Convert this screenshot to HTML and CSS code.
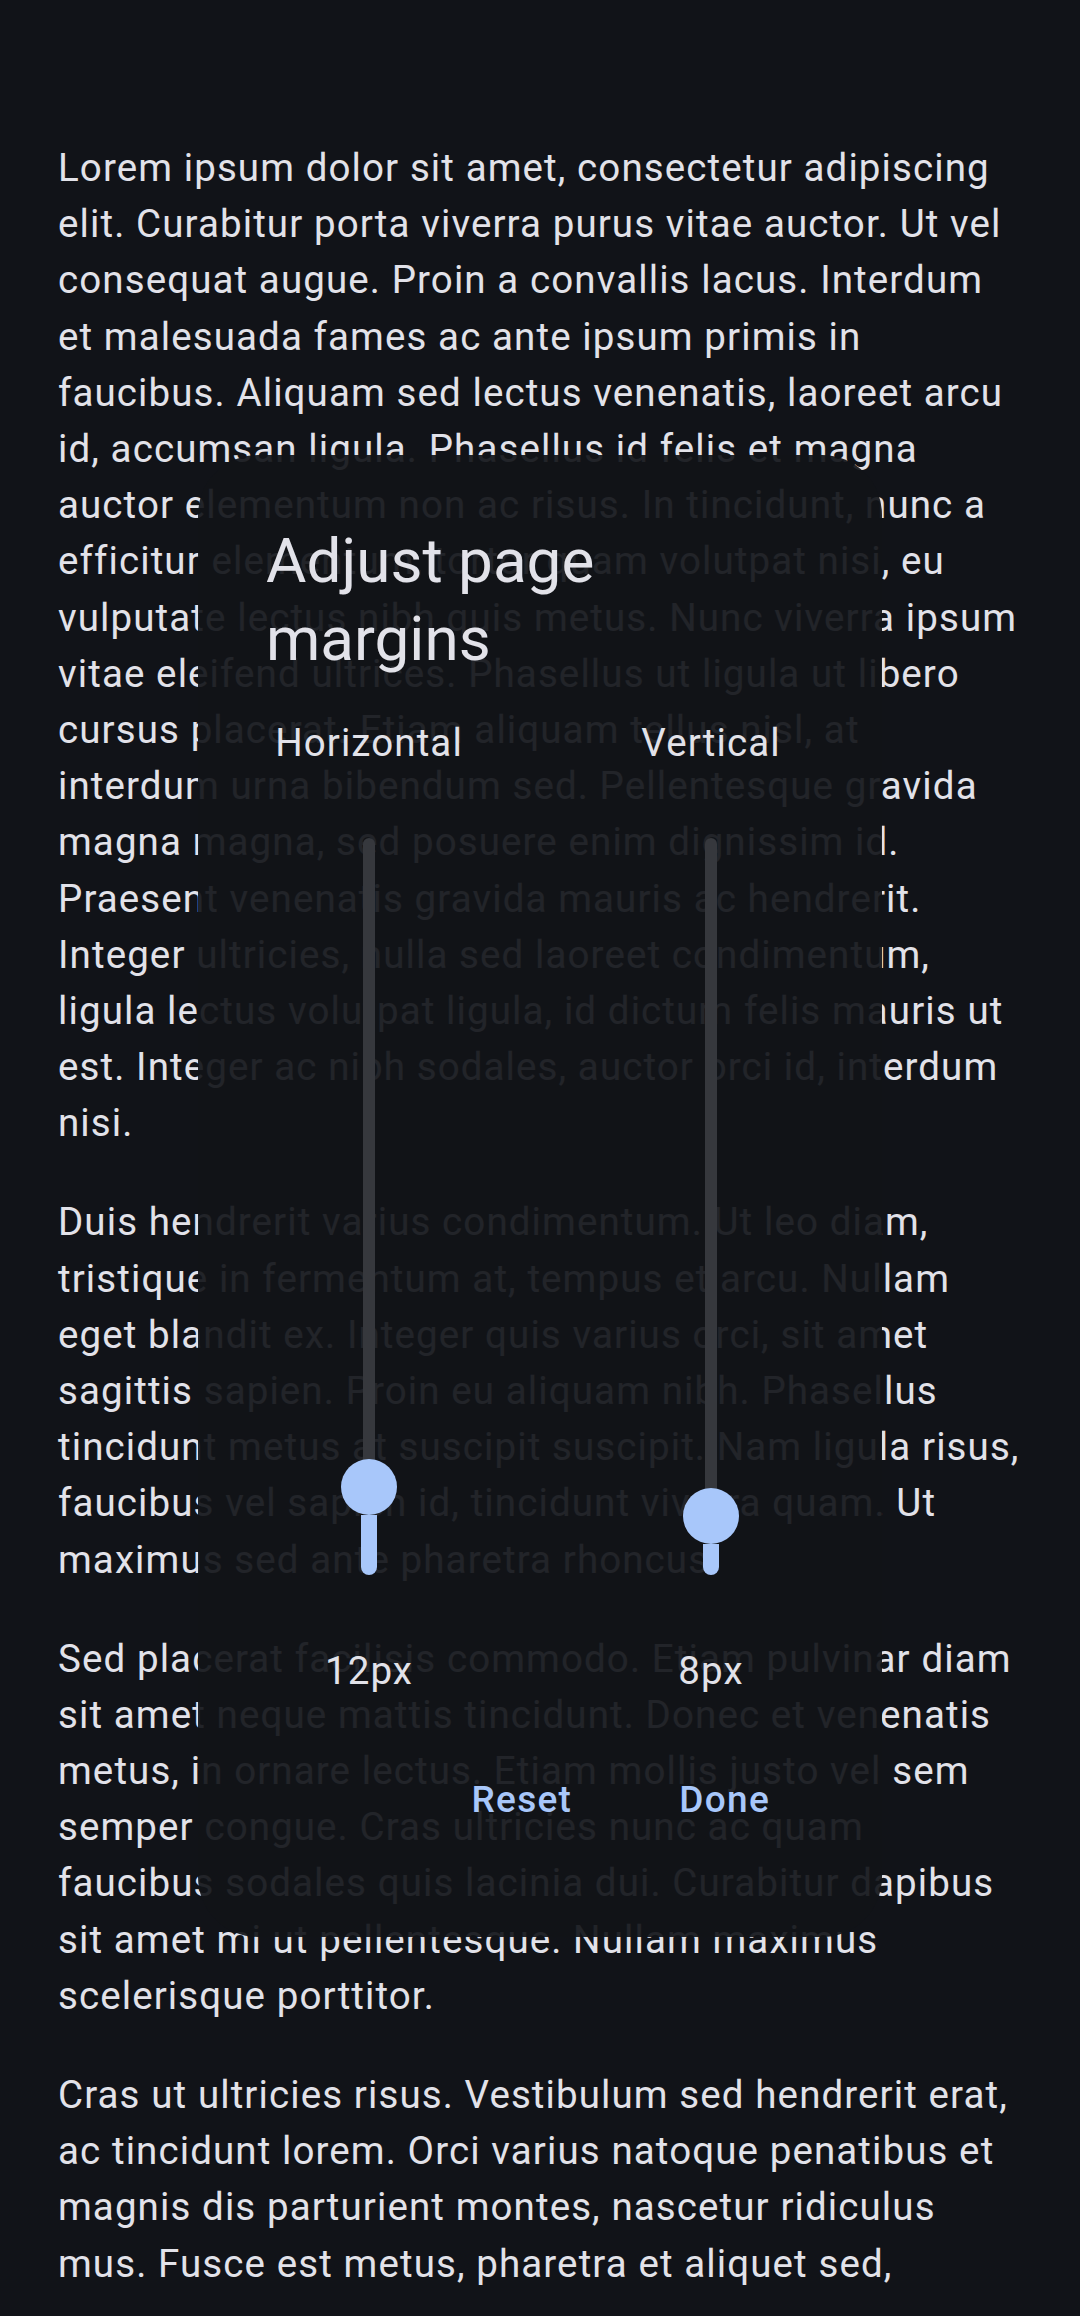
FILE: index.html
```html
<!DOCTYPE html>
<html lang="en">
<head>
<meta charset="utf-8">
<title>Adjust page margins</title>
<link rel="stylesheet" href="styles.css">
</head>
<body>
<main class="reader">
  <p>Lorem ipsum dolor sit amet, consectetur adipiscing elit. Curabitur porta viverra purus vitae auctor. Ut vel consequat augue. Proin a convallis lacus. Interdum et malesuada fames ac ante ipsum primis in faucibus. Aliquam sed lectus venenatis, laoreet arcu id, accumsan ligula. Phasellus id felis et magna auctor elementum non ac risus. In tincidunt, nunc a efficitur elementum, tortor quam volutpat nisi, eu vulputate lectus nibh quis metus. Nunc viverra ipsum vitae eleifend ultrices. Phasellus ut ligula ut libero cursus placerat. Etiam aliquam tellus nisl, at interdum urna bibendum sed. Pellentesque gravida magna magna, sed posuere enim dignissim id. Praesent venenatis gravida mauris ac hendrerit. Integer ultricies, nulla sed laoreet condimentum, ligula lectus volutpat ligula, id dictum felis mauris ut est. Integer ac nibh sodales, auctor orci id, interdum nisi.</p>
  <p>Duis hendrerit varius condimentum. Ut leo diam, tristique in fermentum at, tempus et arcu. Nullam eget blandit ex. Integer quis varius orci, sit amet sagittis sapien. Proin eu aliquam nibh. Phasellus tincidunt metus at suscipit suscipit. Nam ligula risus, faucibus vel sapien id, tincidunt viverra quam. Ut maximus sed ante pharetra rhoncus.</p>
  <p>Sed placerat facilisis commodo. Etiam pulvinar diam sit amet neque mattis tincidunt. Donec et venenatis metus, in ornare lectus. Etiam mollis justo vel sem semper congue. Cras ultricies nunc ac quam faucibus sodales quis lacinia dui. Curabitur dapibus sit amet mi ut pellentesque. Nullam maximus scelerisque porttitor.</p>
  <p>Cras ut ultricies risus. Vestibulum sed hendrerit erat, ac tincidunt lorem. Orci varius natoque penatibus et magnis dis parturient montes, nascetur ridiculus mus. Fusce est metus, pharetra et aliquet sed, fermentum sit amet lectus. Vivamus a tortor non nisl hendrerit tempus.</p>
</main>

<section class="dialog" role="dialog" aria-labelledby="dlg-title">
  <h2 class="dialog-title" id="dlg-title">Adjust page margins</h2>
  <div class="sliders">
    <div class="slider-col">
      <div class="slider-label">Horizontal</div>
      <div class="slider">
        <div class="track-inactive"></div>
        <div class="thumb"></div>
        <div class="track-active" style="height:60px"></div>
      </div>
      <div class="slider-value">12px</div>
    </div>
    <div class="slider-col">
      <div class="slider-label">Vertical</div>
      <div class="slider">
        <div class="track-inactive"></div>
        <div class="thumb"></div>
        <div class="track-active" style="height:31px"></div>
      </div>
      <div class="slider-value">8px</div>
    </div>
  </div>
  <div class="actions">
    <button class="text-btn" type="button">Reset</button>
    <button class="text-btn" type="button">Done</button>
  </div>
</section>
</body>
</html>
```

FILE: styles.css
```css
html, body {
  margin: 0;
  padding: 0;
  background: #111318;
}

body {
  font-family: Roboto, "Noto Sans", "Liberation Sans", sans-serif;
  color: #e2e2e9;
}

.reader {
  box-sizing: border-box;
  height: 2296px;
  overflow: hidden;
  padding: 140px 58px 0;
  font-size: 38.5px;
  line-height: 56.2px;
  letter-spacing: 1.1px;
}

.reader p {
  margin: 0 0 42.8px;
}

.dialog {
  position: absolute;
  top: 455px;
  left: 198px;
  width: 684px;
  box-sizing: border-box;
  padding: 67px 0 93px;
  border-radius: 60px;
  background: rgba(17, 19, 24, 0.92);
  display: flex;
  flex-direction: column;
}

.dialog-title {
  margin: 0;
  padding: 0 68px;
  font-size: 62px;
  line-height: 78px;
  font-weight: 400;
  color: #e2e2e9;
}

.sliders {
  margin-top: 44px;
  display: grid;
  grid-template-columns: 1fr 1fr;
}

.slider-col {
  display: flex;
  flex-direction: column;
  align-items: center;
}

.slider-label,
.slider-value {
  font-size: 38.5px;
  line-height: 42px;
  letter-spacing: 1.1px;
  color: #e2e2e9;
}

.slider {
  margin-top: 74px;
  height: 737px;
  width: 56px;
  display: flex;
  flex-direction: column;
  align-items: center;
}

.track-inactive {
  flex: 1;
  width: 12px;
  background: #36383d;
  border-radius: 6px 6px 0 0;
}

.thumb {
  flex: none;
  width: 56px;
  height: 56px;
  border-radius: 50%;
  background: #a8c7fa;
}

.track-active {
  flex: none;
  width: 16px;
  background: #a8c7fa;
  border-radius: 0 0 8px 8px;
}

.slider-value {
  margin-top: 75px;
}

.actions {
  margin-top: 64px;
  display: flex;
  justify-content: flex-end;
  gap: 55px;
  padding-right: 86px;
}

.text-btn {
  height: 88px;
  padding: 0 26px;
  border: none;
  border-radius: 44px;
  background: transparent;
  color: #a8c7fa;
  font-family: Roboto, "Noto Sans", "Liberation Sans", sans-serif;
  font-size: 37px;
  font-weight: 500;
  line-height: 42px;
  letter-spacing: 1.3px;
}
```
